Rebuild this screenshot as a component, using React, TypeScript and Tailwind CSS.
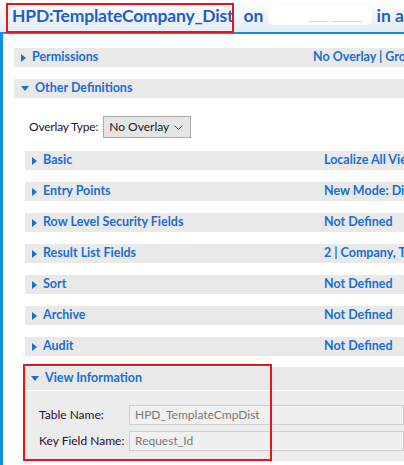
import React from 'react';

const FONT = { fontFamily: 'Lato, "Open Sans", Arial, sans-serif' };

const RightArrow = () => (
  <svg width="5" height="8" viewBox="0 0 5 8" className="shrink-0">
    <path d="M0 0 L5 4 L0 8 Z" fill="#1a6fd0" />
  </svg>
);

const DownArrow = () => (
  <svg width="8" height="5" viewBox="0 0 8 5" className="shrink-0">
    <path d="M0 0 L8 0 L4 5 Z" fill="#1a6fd0" />
  </svg>
);

interface RowProps {
  label: string;
  value?: string;
  open?: boolean;
}

// collapsed/expanded section header bar
const SectionBar: React.FC<RowProps> = ({ label, value, open }) => (
  <div className="h-[19px] shrink-0 bg-[#e9e9e9] flex items-center whitespace-nowrap overflow-hidden">
    <div className="w-[299px] shrink-0 flex items-center pl-[7px] gap-[6px]">
      {open ? <DownArrow /> : <RightArrow />}
      <span className="text-[12.5px] font-bold text-[#1a6fd0]">{label}</span>
    </div>
    {value && <span className="text-[12.5px] font-bold text-[#1a6fd0]">{value}</span>}
  </div>
);

const nested: RowProps[] = [
  { label: 'Basic', value: 'Localize All Views' },
  { label: 'Entry Points', value: 'New Mode: Display' },
  { label: 'Row Level Security Fields', value: 'Not Defined' },
  { label: 'Result List Fields', value: '2 | Company, Template' },
  { label: 'Sort', value: 'Not Defined' },
  { label: 'Archive', value: 'Not Defined' },
  { label: 'Audit', value: 'Not Defined' },
];

export default function App() {
  return (
    <div className="w-[404px] h-[465px] overflow-hidden bg-white relative" style={FONT}>
      {/* title */}
      <div className="h-[32px] bg-gradient-to-b from-white to-[#e4ebf3] flex items-center pl-[12px] whitespace-nowrap">
        <span className="text-[17.5px] font-bold tracking-[-0.2px] text-[#1f5fc9]">HPD:TemplateCompany_Dist</span>
        <span className="text-[17.5px] font-bold text-[#1f5fc9] ml-[10px]">on</span>
        <span className="ml-[5px] w-[117px] h-[18px] rounded-[5px] bg-white flex items-end justify-end pr-[10px] pb-[3px] gap-[5px]">
          <span className="w-[18px] h-[1px] bg-[#d3d6db]" />
          <span className="w-[30px] h-[1px] bg-[#d3d6db]" />
        </span>
        <span className="text-[17.5px] font-bold text-[#1f5fc9] ml-[5px]">in a</span>
      </div>
      <div className="absolute left-[6px] top-[3px] w-[228px] h-[30px] border-2 border-[#e8141b]" />
      <div className="h-[2px] bg-[#1590e0]" />

      <div className="border-l-[3px] border-[#1590e0] h-[431px] pl-[11px] pt-[14px] flex flex-col">
        <SectionBar label="Permissions" value="No Overlay | Groups" />
        <div className="mt-[12px] shrink-0">
          <SectionBar label="Other Definitions" open />
        </div>

        <div className="mt-[18px] pl-[15px] shrink-0 flex items-center gap-[5px] whitespace-nowrap">
          <span className="text-[12px] tracking-[-0.2px] text-[#2a1030]">Overlay Type:</span>
          <div className="w-[88px] h-[22px] border border-[#adadad] bg-[#e5e5e5] flex items-center justify-between pl-[5px] pr-[7px]">
            <span className="text-[12px] text-[#1a1a1a]">No Overlay</span>
            <svg width="9" height="5" viewBox="0 0 9 5">
              <path d="M0.5 0.5 L4.5 4.5 L8.5 0.5" stroke="#555" fill="none" strokeWidth="1" />
            </svg>
          </div>
        </div>

        <div className="ml-[11px] mt-[13px] shrink-0 flex flex-col gap-[12px]">
          {nested.map((r) => (
            <SectionBar key={r.label} label={r.label} value={r.value} />
          ))}
        </div>

        <div className="ml-[11px] mt-[11px] shrink-0 flex flex-col">
          <div className="h-[23px] bg-[#e9e9e9] flex items-center pl-[6px] gap-[6px] whitespace-nowrap">
            <DownArrow />
            <span className="text-[12.5px] font-bold text-[#1a6fd0]">View Information</span>
          </div>
          <div className="h-[1px] bg-white" />
          <div className="bg-[#ececec] pt-[14px] pb-[10px] pl-[14px] flex flex-col gap-[6px] whitespace-nowrap">
            <div className="flex items-center">
              <span className="w-[90px] shrink-0 text-[12px] text-[#2a1030]">Table Name:</span>
              <div className="flex-1 h-[20px] border border-[#cfcfcf] bg-[#f0f0f0] flex items-center pl-[5px]">
                <span className="text-[12px] text-[#7a7a7a]">HPD_TemplateCmpDist</span>
              </div>
            </div>
            <div className="flex items-center">
              <span className="w-[90px] shrink-0 text-[12px] text-[#2a1030]">Key Field Name:</span>
              <div className="flex-1 h-[20px] border border-[#cfcfcf] bg-[#f0f0f0] flex items-center pl-[5px]">
                <span className="text-[12px] text-[#7a7a7a]">Request_Id</span>
              </div>
            </div>
          </div>
        </div>
      </div>
      <div className="absolute left-[23px] top-[364px] w-[249px] h-[97px] border-2 border-[#e8141b]" />
    </div>
  );
}
